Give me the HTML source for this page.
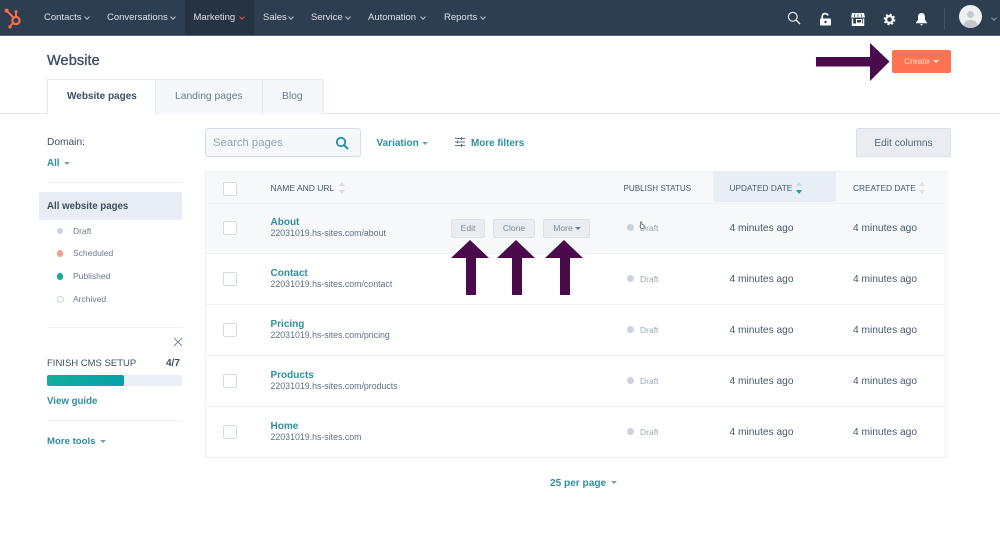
<!DOCTYPE html>
<html><head><meta charset="utf-8">
<style>
html,body{margin:0;padding:0;background:#fff}
body{width:1000px;height:556px;overflow:hidden}
#p{width:1000px;height:556px;position:relative;overflow:hidden;font-family:"Liberation Sans",sans-serif;color:#33475b;filter:blur(.35px);background:#fff}
.a{position:absolute;white-space:nowrap}
.nav{top:11px;font-size:9.5px;line-height:13px;color:#dbe2e9}
.car{position:absolute;width:3px;height:3px;border-right:1px solid #b8c4d0;border-bottom:1px solid #b8c4d0;transform:rotate(45deg)}
.tab{line-height:14px}
.link{color:#2e8f9f;font-weight:bold}
.tri{position:absolute;width:0;height:0;border-left:3px solid transparent;border-right:3px solid transparent;border-top:3px solid #7c98b6}
.cb{position:absolute;left:223px;width:12px;height:12px;background:#fff;border:1px solid #d3dbe5;border-radius:2px}
.th{font-size:8.3px;top:183px;line-height:11px;color:#425b76}
.name{left:270.5px;font-size:10px;font-weight:bold;color:#2e8f9f;line-height:12px}
.url{left:270.5px;font-size:8.8px;color:#5f7186;line-height:11px}
.dot{position:absolute;left:627px;width:7px;height:7px;border-radius:50%;background:#cbd2dc}
.dr{left:640px;font-size:8.5px;color:#99a8b8;line-height:11px}
.t{font-size:10.2px;color:#46596e;line-height:12px}
.btn{position:absolute;top:219px;height:17px;background:#e9edf2;border:1px solid #dbe1e8;border-radius:2px;font-size:8.5px;line-height:17px;text-align:center;color:#7c8b9c}
.side{left:73px;font-size:8.5px;color:#6a7b8e;line-height:11px}
.sd{position:absolute;left:56.5px;width:6.5px;height:6.5px;border-radius:50%}
.row{position:absolute;left:206px;width:738px;height:1px;background:#edf0f4}
</style></head><body><div id="p">

<!-- top nav -->
<div class="a" style="left:0;top:0;width:1000px;height:36px;background:#2d3e50"></div>
<div class="a" style="left:0;top:35px;width:1000px;height:1px;background:#56677a"></div>
<div class="a" style="left:185px;top:0;width:69px;height:35px;background:#253342"></div>
<svg class="a" style="left:3px;top:7px" width="20" height="22" viewBox="0 0 20 22" fill="none" stroke="#f5704a" stroke-width="2">
<circle cx="13" cy="13.5" r="3.6" stroke-width="2.2"/><circle cx="3.6" cy="3.6" r="2" fill="#f5704a" stroke="none"/><circle cx="7" cy="19.8" r="1.7" fill="#f5704a" stroke="none"/>
<path d="M4 4 L10.5 10.5M13 9.5V5M9.8 16L7 19.5"/><circle cx="13" cy="4.5" r="1.5" fill="#f5704a" stroke="none"/></svg>

<div class="a nav" style="left:44px">Contacts</div><div class="car" style="left:84.5px;top:15px"></div>
<div class="a nav" style="left:107px">Conversations</div><div class="car" style="left:170.5px;top:15px"></div>
<div class="a nav" style="left:193.5px">Marketing</div><div class="car" style="left:240px;top:15px;border-color:#e0584a"></div>
<div class="a nav" style="left:263px">Sales</div><div class="car" style="left:288.5px;top:15px"></div>
<div class="a nav" style="left:311px">Service</div><div class="car" style="left:345.5px;top:15px"></div>
<div class="a nav" style="left:368px">Automation</div><div class="car" style="left:421px;top:15px"></div>
<div class="a nav" style="left:444px">Reports</div><div class="car" style="left:480.5px;top:15px"></div>

<!-- right nav icons -->
<svg class="a" style="left:787px;top:11px" width="14" height="14" viewBox="0 0 14 14" fill="none" stroke="#e4e9ee" stroke-width="1.2"><circle cx="5.8" cy="5.8" r="4.4"/><path d="M9 9L13 13" stroke-width="1.5"/></svg>
<svg class="a" style="left:819px;top:12px" width="14" height="14" viewBox="0 0 14 14"><path d="M3.2 7V4.5a3 3 0 0 1 5.8-1" fill="none" stroke="#fff" stroke-width="1.7"/><rect x="1" y="6.5" width="11" height="7" rx="1" fill="#fff"/><circle cx="6.5" cy="10" r="1.2" fill="#2d3e50"/></svg>
<svg class="a" style="left:851px;top:12px" width="14" height="14" viewBox="0 0 14 14"><path d="M1 1H13L14 5.5H0Z" fill="#fff"/><path d="M4 1.5L3.5 5M7 1.5V5M10 1.5L10.5 5" stroke="#2d3e50" stroke-width=".7"/><path d="M1.5 6.5V13.5H12.5V6.5" fill="none" stroke="#fff" stroke-width="1.5"/><rect x="5.5" y="7.5" width="5" height="3.5" fill="none" stroke="#fff"/><rect x="2" y="11.5" width="10" height="2" fill="#fff"/></svg>
<svg class="a" style="left:883px;top:12.5px" width="13" height="13" viewBox="0 0 13 13" fill="none" stroke="#fff"><circle cx="6.5" cy="6.5" r="3.4" stroke-width="2.2"/><circle cx="6.5" cy="6.5" r="5" stroke-width="1.7" stroke-dasharray="2 1.93"/></svg>
<svg class="a" style="left:915px;top:12px" width="13" height="14" viewBox="0 0 13 14"><path d="M6.5 1C4 1 3 3 3 5V8L1 10.5V11.3H12V10.5L10 8V5C10 3 9 1 6.5 1Z" fill="#fff"/><path d="M4.8 12.2H8.2L6.5 13.8Z" fill="#fff"/></svg>
<div class="a" style="left:944px;top:8px;width:1px;height:21px;background:#445566"></div>
<div class="a" style="left:959px;top:5px;width:23px;height:23px;border-radius:50%;background:#eef0f2;overflow:hidden">
<div class="a" style="left:8px;top:6px;width:7px;height:7px;border-radius:50%;background:#c5c9ce"></div>
<div class="a" style="left:4px;top:15px;width:15px;height:10px;border-radius:7px 7px 0 0;background:#c5c9ce"></div></div>
<div class="car" style="left:992px;top:16px;border-color:#8a99a8"></div>

<!-- header -->
<div class="a" style="left:47px;top:51.5px;font-size:14.5px;line-height:18px;color:#3d4f63;-webkit-text-stroke:.35px #3d4f63;letter-spacing:.1px">Website</div>

<!-- tabs -->
<div class="a" style="left:0;top:113px;width:1000px;height:1px;background:#e3e8ef"></div>
<div class="a" style="left:47px;top:78.5px;width:109px;height:35.5px;background:#fff;border:1px solid #e3e8ef;border-bottom:none;box-sizing:border-box"></div>
<div class="a" style="left:155px;top:78.5px;width:108px;height:35px;background:#f5f8fa;border:1px solid #e3e8ef;border-bottom:none;box-sizing:border-box"></div>
<div class="a" style="left:262px;top:78.5px;width:62px;height:35px;background:#f5f8fa;border:1px solid #e3e8ef;border-bottom:none;box-sizing:border-box;border-radius:0 2px 0 0"></div>
<div class="a tab" style="left:67px;top:89.5px;color:#3d4f63;font-weight:bold;font-size:10px">Website pages</div>
<div class="a tab" style="left:175px;top:89.5px;color:#6a7b8e;font-size:10.3px">Landing pages</div>
<div class="a tab" style="left:282px;top:89.5px;color:#6a7b8e;font-size:10.3px">Blog</div>

<!-- create -->
<div class="a" style="left:892px;top:50px;width:59px;height:23px;background:#ff7350;border-radius:2px;font-size:8.5px;line-height:23px;color:#ffd9cc;text-indent:12px">Create</div>
<div class="tri" style="left:933px;top:60px;border-top-color:#ffe6dc"></div>
<svg class="a" style="left:815px;top:42px" width="76" height="40" viewBox="0 0 76 40"><path d="M1 15H55V1L74.5 19.5L55 39V24.5H1Z" fill="#4a0b4d"/></svg>

<!-- sidebar -->
<div class="a" style="left:47px;top:136px;font-size:10.2px;line-height:13px;color:#3d4f63">Domain:</div>
<div class="a link" style="left:47px;top:156.5px;font-size:9.8px;line-height:13px">All</div>
<div class="tri" style="left:64px;top:161.5px"></div>
<div class="a" style="left:47px;top:182px;width:136px;height:1px;background:#eef1f5"></div>
<div class="a" style="left:39px;top:192px;width:143px;height:28px;background:#e8edf4;border-radius:2px"></div>
<div class="a" style="left:47px;top:199.5px;font-size:9.7px;line-height:13px;font-weight:bold;color:#3d4f63">All website pages</div>
<div class="sd" style="top:227.5px;background:#cbd2dc"></div><div class="a side" style="top:225.5px">Draft</div>
<div class="sd" style="top:250px;background:#f5a08c"></div><div class="a side" style="top:248px">Scheduled</div>
<div class="sd" style="top:273px;background:#11aba0"></div><div class="a side" style="top:270.5px">Published</div>
<div class="sd" style="top:295.5px;background:#fff;border:1px solid #cbd2dc;width:5px;height:5px"></div><div class="a side" style="top:293.5px">Archived</div>

<div class="a" style="left:47px;top:327px;width:136px;height:1px;background:#eef1f5"></div>
<svg class="a" style="left:173px;top:337px" width="10" height="10" viewBox="0 0 10 10" stroke="#7a8a9b" stroke-width="1"><path d="M1 1L9 9M9 1L1 9"/></svg>
<div class="a" style="left:47px;top:357px;font-size:9.5px;line-height:13px;color:#3d4f63">FINISH CMS SETUP</div>
<div class="a" style="left:166px;top:357px;font-size:10px;line-height:13px;color:#3d4f63;font-weight:bold">4/7</div>
<div class="a" style="left:47px;top:375px;width:135px;height:11px;background:#eaf0f6;border-radius:2px"></div>
<div class="a" style="left:47px;top:375px;width:77px;height:11px;background:linear-gradient(90deg,#10b09a,#06a0a8);border-radius:2px"></div>
<div class="a link" style="left:47px;top:394.5px;font-size:9.7px;line-height:13px">View guide</div>
<div class="a" style="left:47px;top:420px;width:136px;height:1px;background:#eef1f5"></div>
<div class="a link" style="left:47px;top:434.5px;font-size:9.6px;line-height:13px">More tools</div>
<div class="tri" style="left:100px;top:440px"></div>

<!-- toolbar -->
<div class="a" style="left:205px;top:128px;width:154px;height:27px;background:#f5f8fa;border:1px solid #d5dde6;border-radius:3px"></div>
<div class="a" style="left:213px;top:135.5px;font-size:11.3px;line-height:15px;color:#93a3b3">Search pages</div>
<svg class="a" style="left:335px;top:136px" width="14" height="14" viewBox="0 0 14 14" fill="none" stroke="#1f91a5" stroke-width="1.8"><circle cx="6" cy="6" r="4.2"/><path d="M9 9L13 13" stroke-width="2"/></svg>
<div class="a link" style="left:376.5px;top:136.5px;font-size:10px;line-height:13px">Variation</div>
<div class="tri" style="left:422px;top:141.5px"></div>
<svg class="a" style="left:454px;top:136px" width="12" height="12" viewBox="0 0 12 12" stroke="#5f7186" stroke-width="1"><path d="M1 2.5H11M1 6H11M1 9.5H11"/><path d="M7.5 1V4M3.5 4.5V7.5M7.5 8V11"/></svg>
<div class="a link" style="left:471px;top:136.5px;font-size:9.9px;line-height:13px">More filters</div>
<div class="a" style="left:856px;top:128px;width:93px;height:27px;background:#e9edf2;border:1px solid #dbe1e8;border-radius:2px;font-size:10.2px;line-height:29px;text-align:center;color:#56677a">Edit columns</div>

<!-- table -->
<div class="a" style="left:205px;top:171px;width:745px;height:287px;border:1px solid #edf0f4;border-right:none;box-sizing:border-box"></div>
<div class="a" style="left:944px;top:171px;width:7px;height:287px;background:linear-gradient(90deg,#f3f5f8,#fff)"></div>
<div class="a" style="left:206px;top:172px;width:738px;height:31px;background:#f6f8fa"></div>
<div class="a" style="left:713px;top:172px;width:123px;height:30px;background:#e9edf4"></div>
<div class="a" style="left:206px;top:203px;width:738px;height:50px;background:#f6f8fa"></div>
<div class="row" style="top:202.5px"></div>
<div class="row" style="top:253px"></div>
<div class="row" style="top:304px"></div>
<div class="row" style="top:355px"></div>
<div class="row" style="top:405.5px"></div>
<div class="row" style="top:456.5px"></div>

<div class="cb" style="top:181.5px"></div>
<div class="cb" style="top:221px"></div>
<div class="cb" style="top:272px"></div>
<div class="cb" style="top:323px"></div>
<div class="cb" style="top:374px"></div>
<div class="cb" style="top:425px"></div>

<div class="a th" style="left:270.5px;font-size:8.5px">NAME AND URL</div>
<svg class="a" style="left:338.5px;top:182px" width="6" height="12" viewBox="0 0 6 12" fill="#d5dde6"><path d="M3 0L6 4H0ZM3 12L0 8H6Z"/></svg>
<div class="a th" style="left:623.5px;font-size:8.1px">PUBLISH STATUS</div>
<div class="a th" style="left:729.5px">UPDATED DATE</div>
<svg class="a" style="left:796px;top:182px" width="6" height="12" viewBox="0 0 6 12"><path d="M3 0L6 4H0Z" fill="#cbd6e2"/><path d="M3 12L0 8H6Z" fill="#11a5a8"/></svg>
<div class="a th" style="left:853px">CREATED DATE</div>
<svg class="a" style="left:919px;top:182px" width="6" height="12" viewBox="0 0 6 12" fill="#dfe3eb"><path d="M3 0L6 4H0ZM3 12L0 8H6Z"/></svg>

<div class="a name" style="top:216.5px">About</div><div class="a url" style="top:228px">22031019.hs-sites.com/about</div>
<div class="a name" style="top:267.5px">Contact</div><div class="a url" style="top:279px">22031019.hs-sites.com/contact</div>
<div class="a name" style="top:318.5px">Pricing</div><div class="a url" style="top:330px">22031019.hs-sites.com/pricing</div>
<div class="a name" style="top:369.5px">Products</div><div class="a url" style="top:381px">22031019.hs-sites.com/products</div>
<div class="a name" style="top:421px">Home</div><div class="a url" style="top:432px">22031019.hs-sites.com</div>

<div class="btn" style="left:451px;width:32px">Edit</div>
<div class="btn" style="left:493px;width:40px">Clone</div>
<div class="btn" style="left:543px;width:45px;text-indent:-7px">More</div>
<div class="tri" style="left:575px;top:226.5px;border-top-color:#6a7b8e"></div>

<svg class="a" style="left:450px;top:239px" width="135" height="58" viewBox="0 0 135 58" fill="#4a0b4d">
<path d="M1 19L20 1L39 19H26V56H16V19Z"/>
<path d="M47 19L66 1L85 19H72V56H62V19Z"/>
<path d="M95 19L114 1L133 19H120V56H110V19Z"/>
</svg>

<div class="dot" style="top:224px"></div><div class="a dr" style="top:223px">Draft</div>
<svg class="a" style="left:639px;top:221px" width="6" height="8" viewBox="0 0 6 8" fill="#fff" stroke="#5a6a79" stroke-width=".8"><path d="M1.5 1V5.5L.8 4.8 1.8 7.5H5V4L3 3.4V1Z"/></svg>
<div class="dot" style="top:275px"></div><div class="a dr" style="top:274px">Draft</div>
<div class="dot" style="top:326px"></div><div class="a dr" style="top:324.5px">Draft</div>
<div class="dot" style="top:377px"></div><div class="a dr" style="top:375.5px">Draft</div>
<div class="dot" style="top:427.5px"></div><div class="a dr" style="top:426.5px">Draft</div>

<div class="a t" style="left:729.5px;top:222.5px">4 minutes ago</div><div class="a t" style="left:853px;top:222.5px">4 minutes ago</div>
<div class="a t" style="left:729.5px;top:273.5px">4 minutes ago</div><div class="a t" style="left:853px;top:273.5px">4 minutes ago</div>
<div class="a t" style="left:729.5px;top:324.5px">4 minutes ago</div><div class="a t" style="left:853px;top:324.5px">4 minutes ago</div>
<div class="a t" style="left:729.5px;top:375.5px">4 minutes ago</div><div class="a t" style="left:853px;top:375.5px">4 minutes ago</div>
<div class="a t" style="left:729.5px;top:427px">4 minutes ago</div><div class="a t" style="left:853px;top:427px">4 minutes ago</div>

<div class="a link" style="left:550px;top:477px;font-size:10.1px;line-height:13px">25 per page</div>
<div class="tri" style="left:611px;top:481px"></div>
</div></body></html>
